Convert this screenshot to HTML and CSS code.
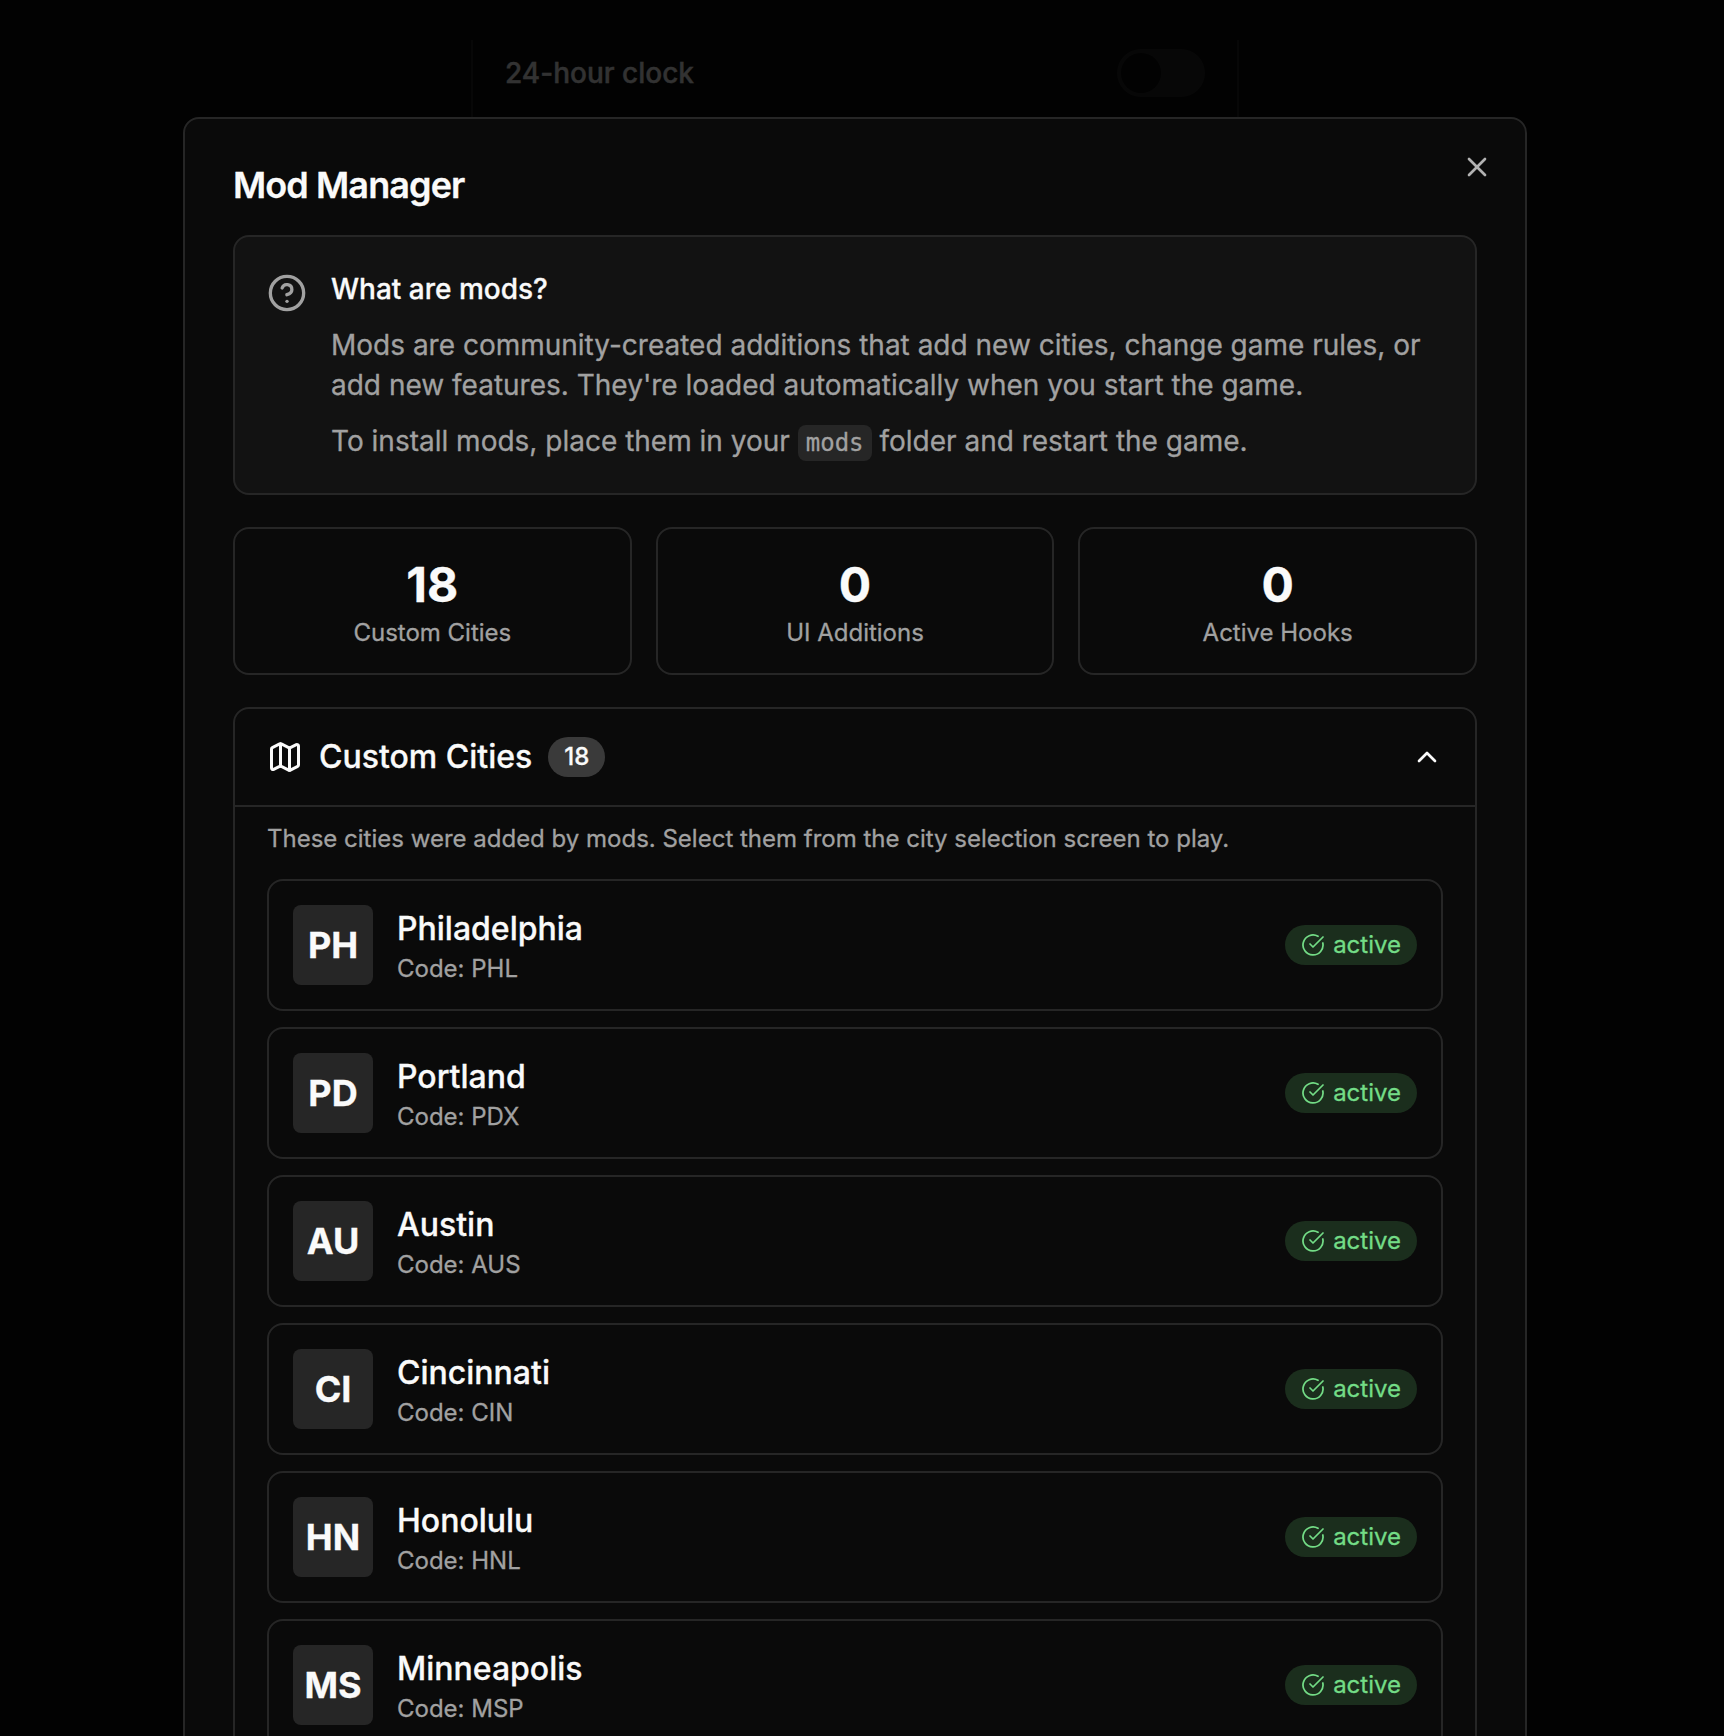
FILE: index.html
```html
<!DOCTYPE html>
<html lang="en">
<head>
<meta charset="utf-8">
<title>Mod Manager</title>
<link rel="stylesheet" href="styles.css">
</head>
<body>
<svg class="sprite" aria-hidden="true">
  <symbol id="check" viewBox="0 0 24 24"><path d="M21.801 10A10 10 0 1 1 17 3.335"/><path d="m9 11 3 3L22 4"/></symbol>
</svg>
<div class="settings">
  <div class="setting"><span>24-hour clock</span><span class="switch"><span class="thumb"></span></span></div>
</div>
<div class="overlay">
  <main class="dialog">
    <h1 class="title">Mod Manager</h1>
    <button class="close" aria-label="Close"><svg class="icon" viewBox="0 0 24 24"><path d="M18 6 6 18"/><path d="m6 6 12 12"/></svg></button>
    <section class="info">
      <svg class="icon info-icon" viewBox="0 0 24 24"><circle cx="12" cy="12" r="10"/><path d="M9.09 9a3 3 0 0 1 5.83 1c0 2-3 3-3 3"/><path d="M12 17h.01"/></svg>
      <div class="info-text">
        <h2>What are mods?</h2>
        <p>Mods are community-created additions that add new cities, change game rules, or add new features. They're loaded automatically when you start the game.</p>
        <p>To install mods, place them in your <code>mods</code> folder and restart the game.</p>
      </div>
    </section>
    <section class="stats">
      <div class="stat"><strong>18</strong><span>Custom Cities</span></div>
      <div class="stat"><strong>0</strong><span>UI Additions</span></div>
      <div class="stat"><strong>0</strong><span>Active Hooks</span></div>
    </section>
    <section class="cities">
      <header class="cities-header">
        <svg class="icon map" viewBox="0 0 24 24"><path d="M14.106 5.553a2 2 0 0 0 1.788 0l3.659-1.83A1 1 0 0 1 21 4.619v12.764a1 1 0 0 1-.553.894l-4.553 2.277a2 2 0 0 1-1.788 0l-4.212-2.106a2 2 0 0 0-1.788 0l-3.659 1.83A1 1 0 0 1 3 19.381V6.618a1 1 0 0 1 .553-.894l4.553-2.277a2 2 0 0 1 1.788 0z"/><path d="M15 5.764v15"/><path d="M9 3.236v15"/></svg>
        <h2>Custom Cities</h2>
        <span class="count">18</span>
        <svg class="icon chevron" viewBox="0 0 24 24"><path d="m18 15-6-6-6 6"/></svg>
      </header>
      <div class="cities-body">
        <p>These cities were added by mods. Select them from the city selection screen to play.</p>
        <ul class="list">
          <li class="city"><span class="tile">PH</span><div class="city-text"><h3>Philadelphia</h3><span>Code: PHL</span></div><span class="status"><svg class="icon"><use href="#check"/></svg>active</span></li>
          <li class="city"><span class="tile">PD</span><div class="city-text"><h3>Portland</h3><span>Code: PDX</span></div><span class="status"><svg class="icon"><use href="#check"/></svg>active</span></li>
          <li class="city"><span class="tile">AU</span><div class="city-text"><h3>Austin</h3><span>Code: AUS</span></div><span class="status"><svg class="icon"><use href="#check"/></svg>active</span></li>
          <li class="city"><span class="tile">CI</span><div class="city-text"><h3>Cincinnati</h3><span>Code: CIN</span></div><span class="status"><svg class="icon"><use href="#check"/></svg>active</span></li>
          <li class="city"><span class="tile">HN</span><div class="city-text"><h3>Honolulu</h3><span>Code: HNL</span></div><span class="status"><svg class="icon"><use href="#check"/></svg>active</span></li>
          <li class="city"><span class="tile">MS</span><div class="city-text"><h3>Minneapolis</h3><span>Code: MSP</span></div><span class="status"><svg class="icon"><use href="#check"/></svg>active</span></li>
        </ul>
      </div>
    </section>
  </main>
</div>
</body>
</html>
```
FILE: styles.css
```css
*, *::before, *::after { box-sizing: border-box; }
html, body { height: 100%; }
body {
  margin: 0;
  overflow: hidden;
  background: #0a0a0a;
  color: #fafafa;
  font-family: Inter, "Liberation Sans", sans-serif;
  font-size: 28px;
  line-height: 40px;
  -webkit-text-stroke: 0.3px currentColor;
}
h1, h2, h3, p, ul { margin: 0; padding: 0; font-weight: 400; }
.sprite { display: none; }
.icon {
  flex: none;
  fill: none;
  stroke: currentColor;
  stroke-width: 2;
  stroke-linecap: round;
  stroke-linejoin: round;
}

/* Settings page behind the dialog */
.settings {
  width: 768px;
  height: 400px;
  margin: 40px 0 0 471px;
  padding: 9px 32px;
  border: solid #262626;
  border-width: 0 2px;
}
.setting { display: flex; align-items: center; justify-content: space-between; height: 48px; font-weight: 500; }
.switch { width: 88px; height: 48px; padding: 4px; border-radius: 24px; background: #262626; }
.thumb { display: block; width: 40px; height: 40px; border-radius: 50%; background: #0a0a0a; }

.overlay {
  position: fixed;
  inset: 0;
  padding: 117px 0 0 183px;
  background: rgba(0, 0, 0, 0.8);
}
.dialog {
  position: relative;
  display: flex;
  flex-direction: column;
  gap: 32px;
  width: 1344px;
  height: 1900px;
  padding: 48px;
  padding-top: 47.5px;
  border: 2px solid #262626;
  border-radius: 16px;
  background: #0a0a0a;
}
.title { font-size: 36px; line-height: 36px; font-weight: 600; letter-spacing: -0.025em; }
.close {
  position: absolute;
  top: 32px;
  right: 32px;
  width: 32px;
  height: 32px;
  padding: 0;
  border: 0;
  background: none;
  color: #fafafa;
  opacity: 0.7;
}
.close .icon { display: block; width: 32px; height: 32px; }

.info {
  display: flex;
  gap: 24px;
  padding: 32px;
  border: 2px solid #262626;
  border-radius: 16px;
  background: #121212;
}
.info-icon { width: 40px; height: 40px; margin-top: 4px; color: #a1a1a1; }
.info-text { display: flex; flex-direction: column; gap: 16px; }
.info-text h2 { font-size: 28px; font-weight: 500; }
.info-text p { color: #a1a1a1; }
.info-text code {
  padding: 4px 8px;
  border-radius: 8px;
  background: #262626;
  font-family: "DejaVu Sans Mono", monospace;
  font-size: 24px;
  line-height: 1;
}

.stats { display: grid; grid-template-columns: repeat(3, 1fr); gap: 24px; }
.stat {
  display: flex;
  flex-direction: column;
  padding: 24px;
  border: 2px solid #262626;
  border-radius: 16px;
  text-align: center;
}
.stat strong { font-size: 48px; line-height: 64px; font-weight: 700; }
.stat span { color: #a1a1a1; font-size: 24px; line-height: 32px; }

.cities { flex: 1; border: 2px solid #262626; border-radius: 16px; }
.cities-header {
  display: flex;
  align-items: center;
  gap: 16px;
  height: 98px;
  padding: 0 32px;
  border-bottom: 2px solid #262626;
}
.cities-header h2 { font-size: 32px; font-weight: 500; }
.map { width: 36px; height: 36px; }
.count {
  padding: 4px 16px;
  border-radius: 20px;
  background: #3a3a3a;
  font-size: 24px;
  line-height: 32px;
  font-weight: 500;
}
.chevron { width: 32px; height: 32px; margin-left: auto; }
.cities-body { padding: 16px 32px 32px; }
.cities-body > p { margin-bottom: 24px; color: #a1a1a1; font-size: 24px; line-height: 32px; }
.list { display: flex; flex-direction: column; gap: 16px; list-style: none; }
.city {
  display: flex;
  align-items: center;
  gap: 24px;
  padding: 24px;
  border: 2px solid #262626;
  border-radius: 16px;
}
.tile {
  display: grid;
  place-items: center;
  width: 80px;
  height: 80px;
  border-radius: 8px;
  background: #262626;
  font-size: 36px;
  font-weight: 700;
}
.city-text h3 { font-size: 32px; line-height: 48px; font-weight: 500; }
.city-text span { display: block; color: #a1a1a1; font-size: 24px; line-height: 32px; }
.status {
  display: flex;
  align-items: center;
  gap: 8px;
  margin-left: auto;
  padding: 4px 16px;
  border-radius: 20px;
  background: #1b2e1d;
  color: #73dc86;
  font-size: 24px;
  line-height: 32px;
}
.status .icon { width: 24px; height: 24px; stroke-width: 1.75; }
```
